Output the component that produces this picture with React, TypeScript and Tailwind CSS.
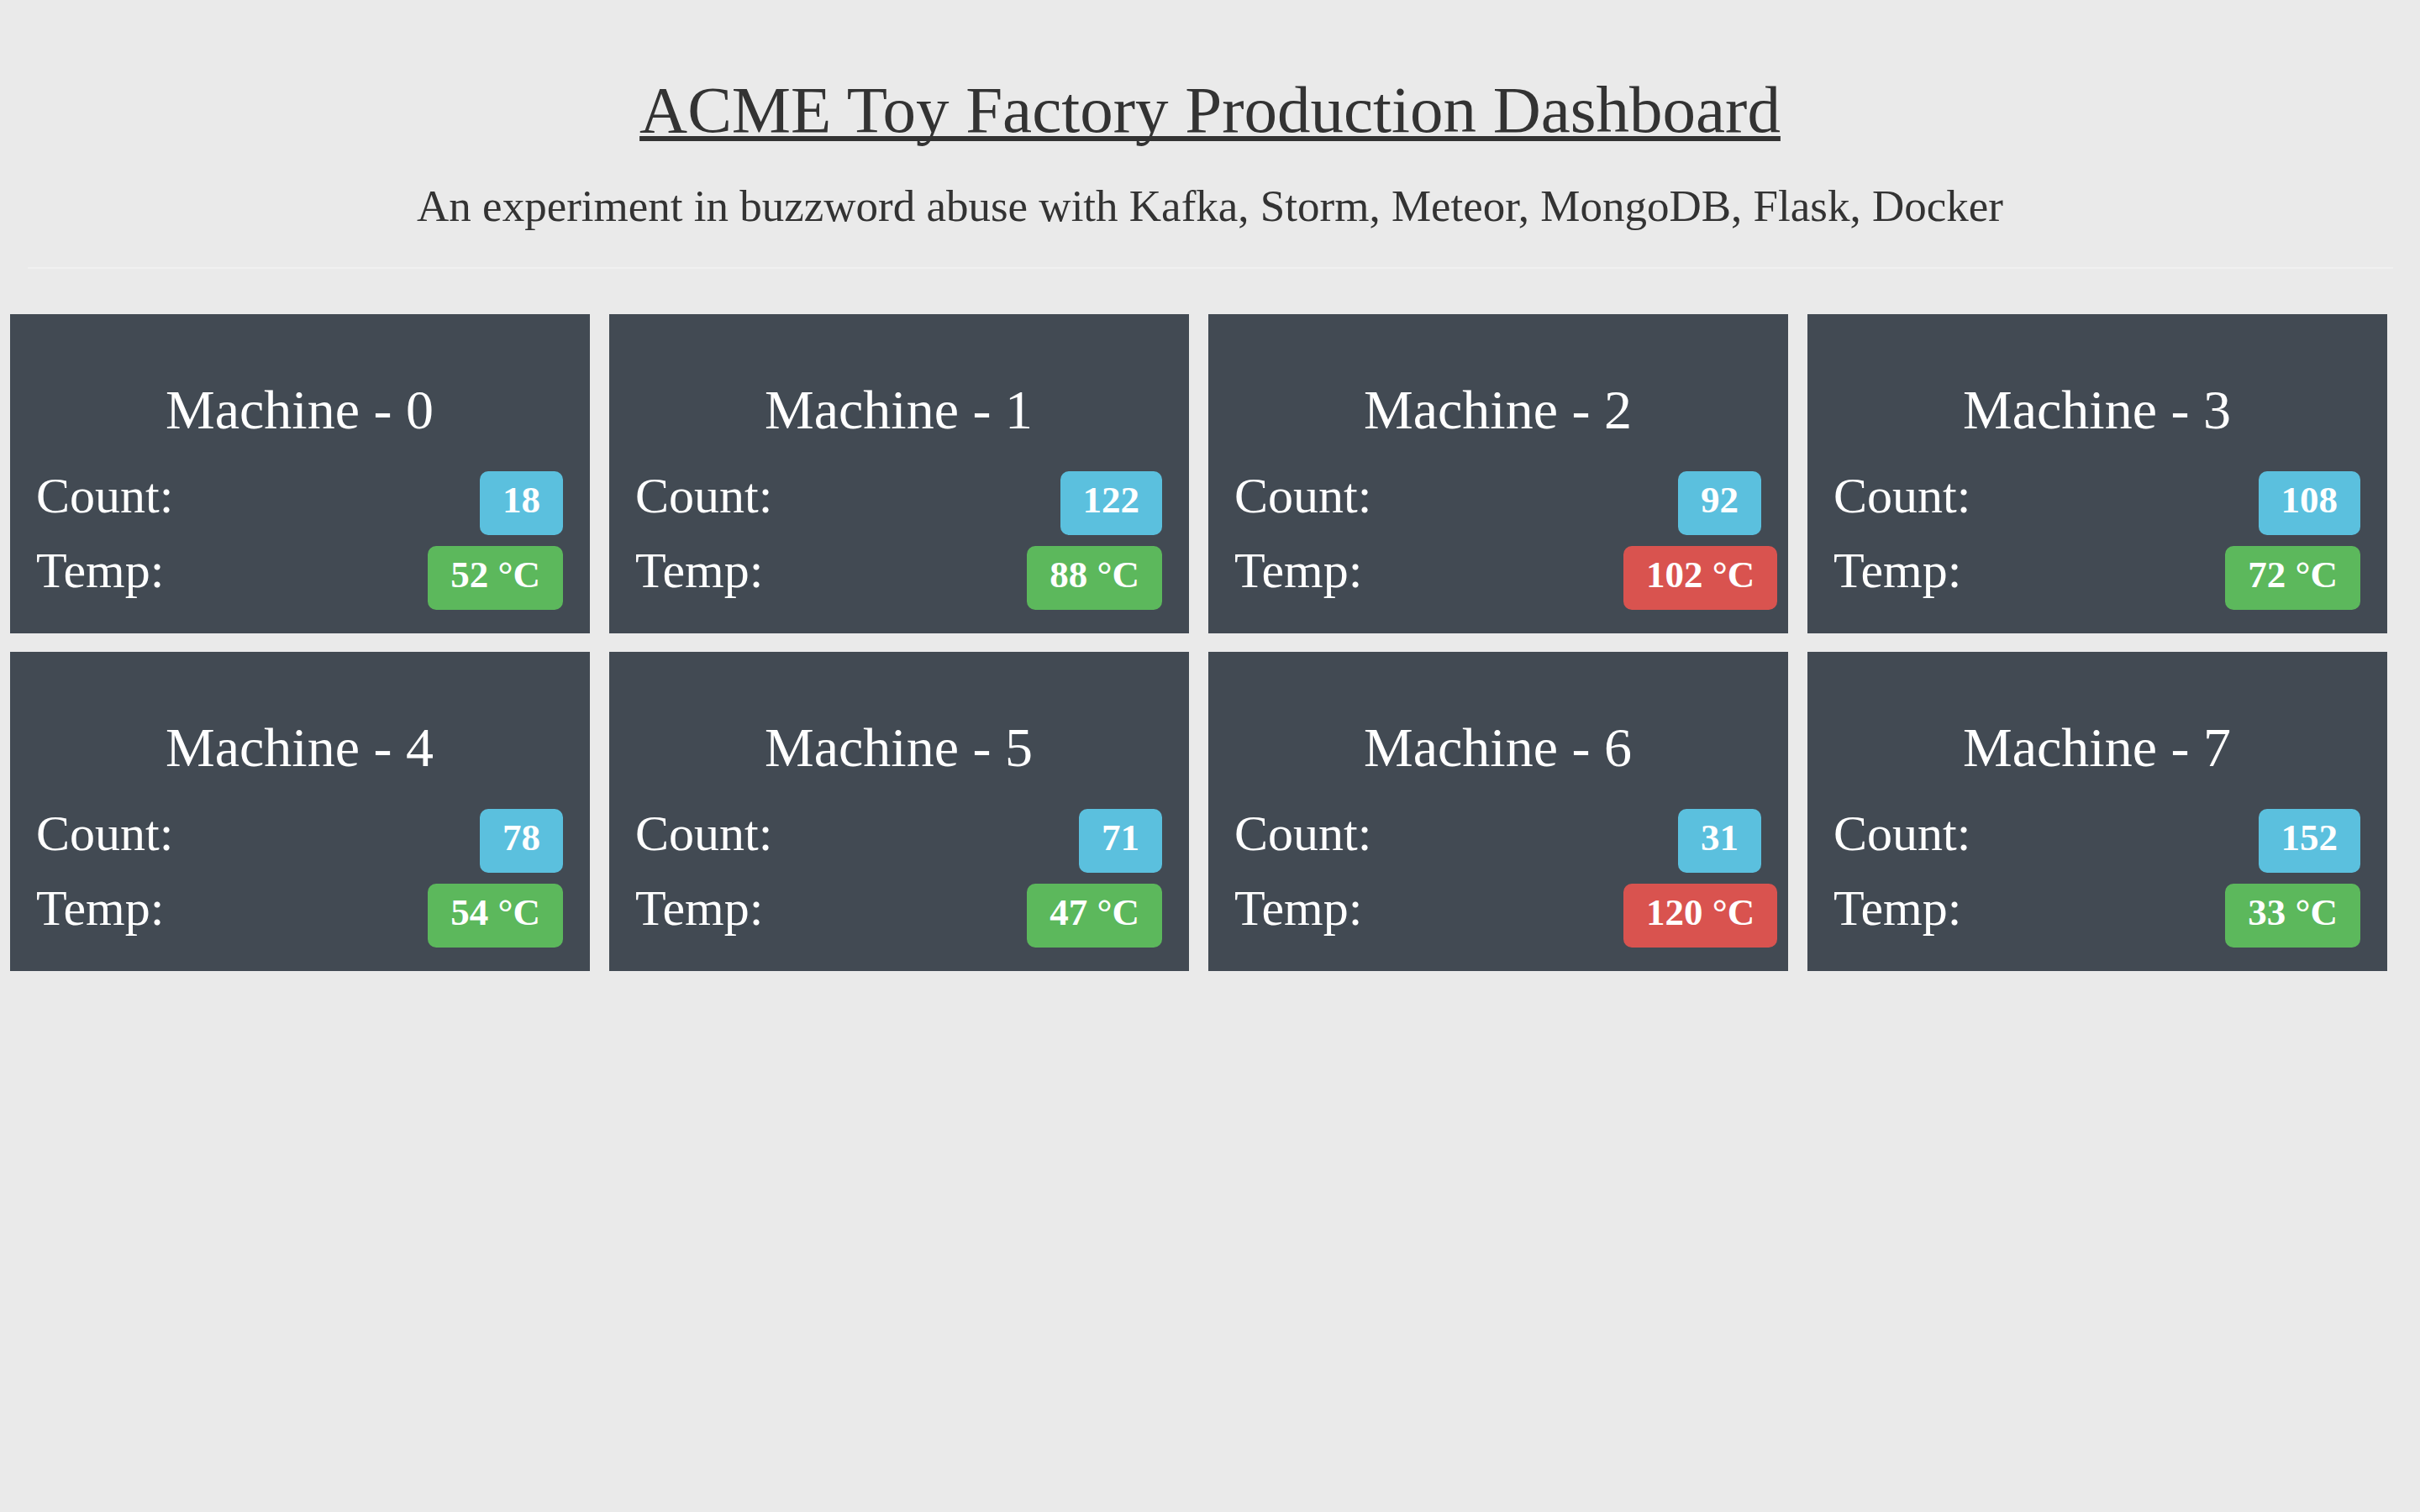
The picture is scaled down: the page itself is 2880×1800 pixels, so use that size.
import React from "react";

type Machine = { id: number; count: number; temp: number };

const machines: Machine[] = [
  { id: 0, count: 18, temp: 52 },
  { id: 1, count: 122, temp: 88 },
  { id: 2, count: 92, temp: 102 },
  { id: 3, count: 108, temp: 72 },
  { id: 4, count: 78, temp: 54 },
  { id: 5, count: 71, temp: 47 },
  { id: 6, count: 31, temp: 120 },
  { id: 7, count: 152, temp: 33 },
];

function Badge({ children, tone }: { children: React.ReactNode; tone: "info" | "ok" | "hot" }) {
  const bg = tone === "info" ? "bg-[#5bc0de]" : tone === "ok" ? "bg-[#5cb85c]" : "bg-[#d9534f]";
  return (
    <span
      className={`inline-block whitespace-nowrap rounded-[10px] px-[27px] pb-[8px] text-[45px] font-bold leading-[68px] text-white ${bg}`}
    >
      {children}
    </span>
  );
}

function Card({ m }: { m: Machine }) {
  return (
    <div className="flex h-[380px] w-[690px] flex-col bg-[#424a53] pl-[31px] pr-[32px] pt-[81px] text-white">
      <h2 className="text-center text-[66px] font-normal leading-none">Machine - {m.id}</h2>
      <div className="mt-[39px] flex items-baseline">
        <div className="flex-1 text-[60px] leading-none">Count:</div>
        <div className="w-[164px] text-right">
          <Badge tone="info">{m.count}</Badge>
        </div>
      </div>
      <div className="mt-[12px] flex items-baseline">
        <div className="flex-1 text-[60px] leading-none">Temp:</div>
        <div className="w-[164px] text-right">
          <Badge tone={m.temp > 100 ? "hot" : "ok"}>{m.temp} °C</Badge>
        </div>
      </div>
    </div>
  );
}

export default function App() {
  return (
    <div
      className="min-h-[1800px] w-full bg-[#eaeaea] text-[#333333]"
      style={{ fontFamily: '"Liberation Serif", "Times New Roman", serif' }}
    >
      <div className="pt-[91px] text-center">
        <h1 className="text-[79px] font-normal leading-none underline decoration-[6px] underline-offset-[5px] [text-decoration-skip-ink:none]">
          ACME Toy Factory Production Dashboard
        </h1>
        <p className="mt-[49px] text-[53px] leading-none">
          An experiment in buzzword abuse with Kafka, Storm, Meteor, MongoDB, Flask, Docker
        </p>
      </div>
      <div className="ml-[33px] mr-[32px] mt-[46px] h-[2px] bg-[#f0f0f0]" />
      <div className="grid grid-cols-[repeat(4,690px)] gap-x-[23px] gap-y-[22px] pl-[12px] pt-[54px]">
        {machines.map((m) => (
          <Card key={m.id} m={m} />
        ))}
      </div>
    </div>
  );
}
